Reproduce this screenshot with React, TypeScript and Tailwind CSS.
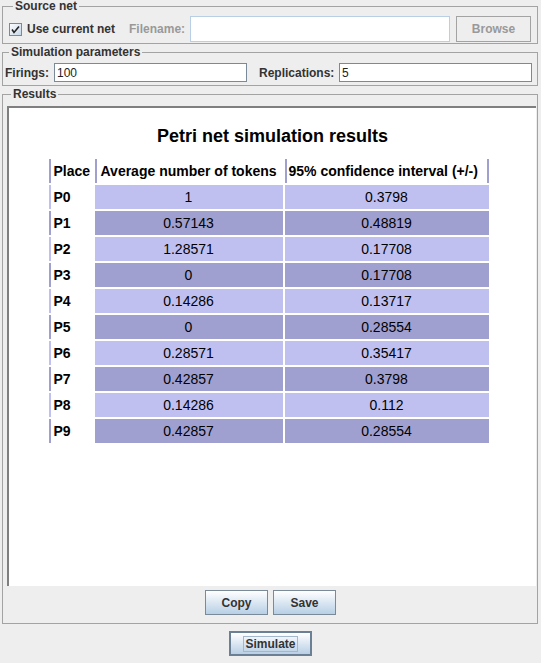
import React from 'react'

const rows: [string, string, string][] = [
  ['P0', '1', '0.3798'],
  ['P1', '0.57143', '0.48819'],
  ['P2', '1.28571', '0.17708'],
  ['P3', '0', '0.17708'],
  ['P4', '0.14286', '0.13717'],
  ['P5', '0', '0.28554'],
  ['P6', '0.28571', '0.35417'],
  ['P7', '0.42857', '0.3798'],
  ['P8', '0.14286', '0.112'],
  ['P9', '0.42857', '0.28554']
]

function CheckBox() {
  return (
    <svg width="13" height="13" viewBox="0 0 13 13" className="shrink-0">
      <defs>
        <linearGradient id="cb" x1="0" y1="0" x2="1" y2="1">
          <stop offset="0" stopColor="#ffffff" />
          <stop offset="1" stopColor="#c5d6e7" />
        </linearGradient>
      </defs>
      <rect x="0.5" y="0.5" width="12" height="12" fill="url(#cb)" stroke="#7a8a99" />
      <path d="M3 6.5 L5 9.5 L10 3.5" fill="none" stroke="#222" strokeWidth="1.6" />
    </svg>
  )
}

function Field({ value, w }: { value?: string; w: string }) {
  return (
    <div className={`${w} h-full bg-white border border-[#7a8a99] pl-[2px] flex items-center font-normal text-[12px] text-[#222]`}>
      {value}
    </div>
  )
}

export default function App() {
  return (
    <div className="w-[541px] h-[663px] bg-[#eeeeee] flex flex-col font-['Liberation_Sans',Arial,sans-serif] text-[12px] text-[#333333] overflow-hidden">
      {/* Source net */}
      <fieldset className="ml-[2px] mr-[3px] border border-[#a3a3a3] pl-[6px] pr-[4px] pt-[4px] pb-[1px]">
        <legend className="ml-[4px] px-[2px] font-bold leading-[12px]">Source net</legend>
        <div className="flex items-center h-[26px]">
          <CheckBox />
          <span className="ml-[5px] font-bold">Use current net</span>
          <span className="ml-[14px] font-bold text-[#999999]">Filename:</span>
          <div className="ml-[5px] h-[26px] w-[260px] bg-white border border-[#b8cfe5]" />
          <div className="ml-[6px] h-[26px] w-[75px] border border-[#a3a3a3] flex items-center justify-center font-bold text-[#999999]">
            Browse
          </div>
        </div>
      </fieldset>

      {/* Simulation parameters */}
      <fieldset className="mt-[2px] ml-[2px] mr-[3px] border border-[#a3a3a3] pl-[2px] pr-[4px] pt-[5px] pb-[3px]">
        <legend className="ml-[4px] px-[2px] font-bold leading-[12px]">Simulation parameters</legend>
        <div className="flex items-center h-[19px] font-bold">
          <span className="w-[49px]">Firings:</span>
          <Field value="100" w="w-[193px]" />
          <span className="ml-[12px] w-[80px]">Replications:</span>
          <Field value="5" w="w-[193px]" />
        </div>
      </fieldset>

      {/* Results */}
      <fieldset className="mt-[2px] ml-[2px] mr-[3px] border border-[#a3a3a3] pl-[4px] pr-[1px] pt-[6px] pb-[8px]">
        <legend className="ml-[4px] px-[2px] font-bold leading-[12px]">Results</legend>
        <div className="h-[480px] bg-white border-t-2 border-l-2 border-[#7f7f7f] flex flex-col items-center pt-[17px]">
          <div className="font-bold text-[18px] leading-[22px] text-black">Petri net simulation results</div>
          <div className="mt-[12px] mr-[8px] grid grid-cols-[44px_188px_204px] gap-[2px] text-[14px] text-black">
            <div className="h-[24px] border-l-2 border-[#a0a0d0] pl-[3px] font-bold flex items-center">Place</div>
            <div className="h-[24px] border-l-2 border-[#a0a0d0] pl-[4px] font-bold flex items-center">Average number of tokens</div>
            <div className="h-[24px] border-l-2 border-r-2 border-[#a0a0d0] pl-[2px] font-bold flex items-center whitespace-nowrap">95% confidence interval (+/-)</div>
            {rows.map(([p, avg, ci], i) => {
              const bg = i % 2 === 0 ? 'bg-[#c0c0f0]' : 'bg-[#a0a0d0]'
              const bd = i % 2 === 0 ? 'border-[#c0c0f0]' : 'border-[#a0a0d0]'
              return (
                <React.Fragment key={p}>
                  <div className={`h-[24px] border-l-2 ${bd} pl-[3px] font-bold flex items-center`}>{p}</div>
                  <div className={`h-[24px] ${bg} flex items-center justify-center`}>{avg}</div>
                  <div className={`h-[24px] ${bg} flex items-center justify-center`}>{ci}</div>
                </React.Fragment>
              )
            })}
          </div>
        </div>
        <div className="mt-[4px] flex justify-center gap-[5px] pr-[2px]">
          <button className="w-[63px] h-[25px] border border-[#7a8a99] bg-gradient-to-b from-white to-[#b8cfe5] font-bold text-[#333333]">
            Copy
          </button>
          <button className="w-[63px] h-[25px] border border-[#7a8a99] bg-gradient-to-b from-white to-[#b8cfe5] font-bold text-[#333333]">
            Save
          </button>
        </div>
      </fieldset>

      <div className="mt-[7px] flex justify-center">
        <button className="w-[83px] h-[25px] border-2 border-[#6b7f95] bg-gradient-to-b from-white to-[#b8cfe5] font-bold text-[#333333] flex items-center justify-center">
          <span className="border border-[#a3b8cc] px-[1px] leading-[14px]">Simulate</span>
        </button>
      </div>
    </div>
  )
}
